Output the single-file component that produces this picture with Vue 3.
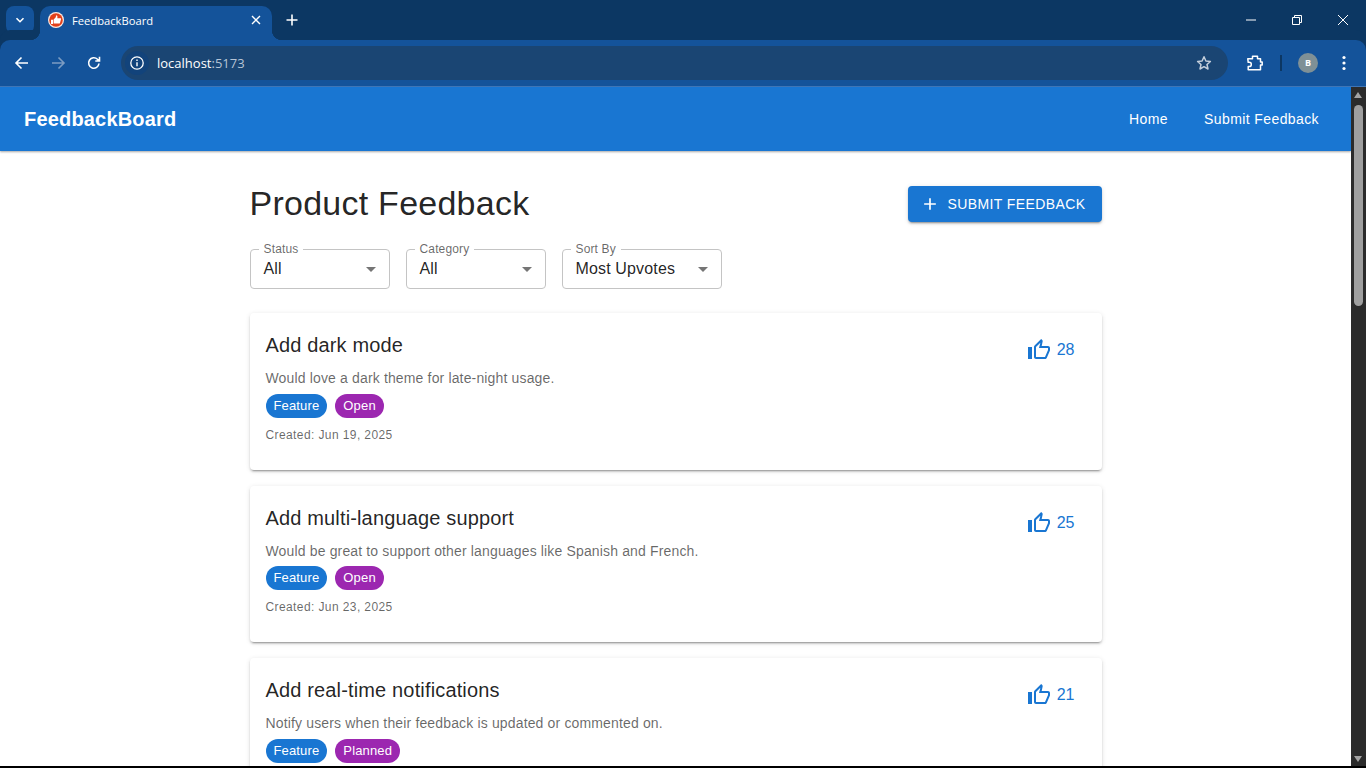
<template>
  <div class="window">
    <div class="tabstrip">
      <button class="tab-search">
        <svg width="12" height="12" viewBox="0 0 12 12"><path d="M2.5 4.2 6 7.7l3.5-3.5" fill="none" stroke="#fff" stroke-width="1.6" /></svg>
      </button>
      <div class="tab">
        <svg class="favicon" width="16" height="16" viewBox="0 0 16 16">
          <circle cx="8" cy="8" r="8" fill="#fbe9e2" />
          <circle cx="8" cy="8" r="6.800" fill="#e2401a" />
          <path d="M3 7.800h2v4.200H3zM5.600 7.600l2-2 .7-2.300c1 0 1.400 1 1 3h3c.6 0 .9.500.7 1l-1 3.700c-.1.400-.4.600-.8.600H5.600z" fill="#fff" />
        </svg>
        <span class="tab-title">FeedbackBoard</span>
        <svg width="10" height="10" viewBox="0 0 10 10"><path d="M1 1l8 8M9 1l-8 8" stroke="#fff" stroke-width="1.4" /></svg>
      </div>
      <svg class="new-tab" width="12" height="12" viewBox="0 0 12 12"><path d="M6 .5v11M.5 6h11" stroke="#fff" stroke-width="1.6" /></svg>
      <div class="win-controls">
        <svg width="10" height="10" viewBox="0 0 10 10"><path d="M0 5h10" stroke="#fff" /></svg>
        <svg width="10" height="10" viewBox="0 0 10 10"><path d="M.5 2.5h7v7h-7zM2.5 2.5V.5h7v7h-2" fill="none" stroke="#fff" /></svg>
        <svg width="10" height="10" viewBox="0 0 10 10"><path d="M0 0l10 10M10 0L0 10" stroke="#fff" /></svg>
      </div>
    </div>

    <div class="toolbar">
      <div class="nav-icons">
        <svg width="16" height="16" viewBox="0 0 16 16"><path d="M14 8H2.5M7.5 2.5 2 8l5.500 5.500" fill="none" stroke="#fff" stroke-width="1.6" /></svg>
        <svg width="16" height="16" viewBox="0 0 16 16"><path d="M2 8h11.500M8.500 2.500 14 8l-5.500 5.500" fill="none" stroke="#7c9cc2" stroke-width="1.6" /></svg>
        <svg width="16" height="16" viewBox="0 0 16 16"><path d="M13 8.500A5.200 5.200 0 1 1 11.500 4.300L13.500 6M13.500 1.800V6H9.300" fill="none" stroke="#fff" stroke-width="1.6" /></svg>
      </div>
      <div class="omnibox">
        <div class="site-info">
          <svg width="16" height="16" viewBox="0 0 16 16"><circle cx="8" cy="8" r="6.200" fill="none" stroke="#fff" stroke-width="1.300" /><path d="M8 7.200v4M8 4.400v1.500" stroke="#fff" stroke-width="1.400" /></svg>
        </div>
        <span class="url">localhost<span class="url-port">:5173</span></span>
        <svg class="star" width="16" height="16" viewBox="0 0 16 16"><path d="M8 1.800l1.900 4.200 4.500.5-3.400 3 1 4.500L8 11.700 4 14l1-4.500-3.400-3 4.500-.5z" fill="none" stroke="#c3cedb" stroke-width="1.500" stroke-linejoin="round" /></svg>
      </div>
      <svg class="ext" width="18" height="18" viewBox="0 0 18 18"><path d="M1.800 4.800h4.700V2.300h5v2.500h3v3.200h1.700v3h-1.700v4.700H2.200v-3.200h1a2.100 2.100 0 0 0 0-4.200h-1z" fill="none" stroke="#fff" stroke-width="1.500" stroke-linejoin="round" /></svg>
      <span class="divider"></span>
      <span class="avatar">B</span>
      <svg class="menu" width="4" height="16" viewBox="0 0 4 16"><circle cx="2" cy="2.500" r="1.600" fill="#fff" /><circle cx="2" cy="8" r="1.600" fill="#fff" /><circle cx="2" cy="13.500" r="1.600" fill="#fff" /></svg>
    </div>

    <div class="viewport">
      <div class="page">
        <header class="appbar">
          <div class="brand">FeedbackBoard</div>
          <nav class="nav">
            <a>Home</a>
            <a>Submit Feedback</a>
          </nav>
        </header>

        <main class="container">
          <div class="heading">
            <h1>Product Feedback</h1>
            <button class="submit">
              <svg width="20" height="20" viewBox="0 0 24 24"><path d="M19 13h-6v6h-2v-6H5v-2h6V5h2v6h6v2z" fill="#fff" /></svg>
              SUBMIT FEEDBACK
            </button>
          </div>

          <div class="filters">
            <div v-for="f in filters" :key="f.label" class="select" :style="{ width: f.width + 'px' }">
              <label>{{ f.label }}</label>
              <span>{{ f.value }}</span>
              <svg width="24" height="24" viewBox="0 0 24 24"><path d="M7 10l5 5 5-5z" fill="#757575" /></svg>
            </div>
          </div>

          <article v-for="item in feedback" :key="item.title" class="card">
            <div class="card-body">
              <h2>{{ item.title }}</h2>
              <p class="desc">{{ item.desc }}</p>
              <div class="chips">
                <span class="chip chip-blue">{{ item.category }}</span>
                <span class="chip chip-purple">{{ item.status }}</span>
              </div>
              <p class="created">Created: {{ item.created }}</p>
            </div>
            <div class="votes">
              <svg width="24" height="24" viewBox="0 0 24 24"><path d="M9 21h9c.83 0 1.540-.5 1.840-1.220l3.020-7.050c.09-.23.14-.47.14-.73v-2c0-1.100-.9-2-2-2h-6.310l.95-4.570.03-.32c0-.41-.17-.79-.44-1.060L14.170 1 7.580 7.590C7.220 7.950 7 8.450 7 9v10c0 1.100.9 2 2 2zM9 9l4.340-4.340L12 10h9v2l-3 7H9V9zM1 9h4v12H1z" fill="#1976d2" /></svg>
              <span>{{ item.votes }}</span>
            </div>
          </article>
        </main>
      </div>

      <div class="scrollbar">
        <span class="arrow-up"></span>
        <span class="thumb"></span>
        <span class="arrow-down"></span>
      </div>
    </div>
    <div class="bottom-edge"></div>
  </div>
</template>

<script setup>
const filters = [
  { label: 'Status', value: 'All', width: 140 },
  { label: 'Category', value: 'All', width: 140 },
  { label: 'Sort By', value: 'Most Upvotes', width: 160 },
]

const feedback = [
  { title: 'Add dark mode', desc: 'Would love a dark theme for late-night usage.', category: 'Feature', status: 'Open', created: 'Jun 19, 2025', votes: 28 },
  { title: 'Add multi-language support', desc: 'Would be great to support other languages like Spanish and French.', category: 'Feature', status: 'Open', created: 'Jun 23, 2025', votes: 25 },
  { title: 'Add real-time notifications', desc: 'Notify users when their feedback is updated or commented on.', category: 'Feature', status: 'Planned', created: 'Jun 25, 2025', votes: 21 },
]
</script>

<style>
html, body {
  margin: 0;
  overflow: hidden;
}
</style>

<style scoped>
.window {
  height: 768px;
  display: flex;
  flex-direction: column;
  overflow: hidden;
  background: #000;
  font-family: "Liberation Sans", Arial, sans-serif;
}

/* browser chrome */
.tabstrip {
  height: 40px;
  flex: none;
  display: flex;
  align-items: flex-end;
  background: #0c3763;
  padding-left: 6px;
}
.tab-search {
  width: 28px;
  height: 28px;
  margin-bottom: 6px;
  padding: 0;
  border: 0;
  border-radius: 8px;
  background: #14539a;
  display: flex;
  align-items: center;
  justify-content: center;
}
.tab {
  position: relative;
  width: 232px;
  height: 34px;
  margin-left: 6px;
  box-sizing: border-box;
  padding: 0 11px 6px 8px;
  display: flex;
  align-items: center;
  border-radius: 10px 10px 0 0;
  background: #14539a;
}
.tab::before,
.tab::after {
  content: "";
  position: absolute;
  bottom: 0;
  width: 10px;
  height: 10px;
}
.tab::before {
  left: -10px;
  background: radial-gradient(circle at 0 0, transparent 10px, #14539a 10.5px);
}
.tab::after {
  right: -10px;
  background: radial-gradient(circle at 100% 0, transparent 10px, #14539a 10.5px);
}
.tab-title {
  flex: 1;
  margin-left: 8px;
  color: #fff;
  font: 11.2px "Open Sans", sans-serif;
}
.new-tab {
  margin: 0 0 14px 14px;
}
.win-controls {
  margin-left: auto;
  height: 40px;
  display: flex;
  align-items: center;
  gap: 36px;
  padding-right: 18px;
}

.toolbar {
  height: 47px;
  flex: none;
  box-sizing: border-box;
  display: flex;
  align-items: center;
  background: #14539a;
  border-bottom: 1px solid #3f75b5;
  border-radius: 10px 10px 0 0;
  box-shadow: 0 -10px 0 #0c3763;
}
.nav-icons {
  width: 121px;
  flex: none;
  box-sizing: border-box;
  padding-left: 14px;
  display: flex;
  gap: 20px;
}
.omnibox {
  width: 1107px;
  height: 34px;
  flex: none;
  display: flex;
  align-items: center;
  border-radius: 17px;
  background: #1a4573;
}
.site-info {
  width: 24px;
  height: 24px;
  margin-left: 4px;
  border-radius: 12px;
  background: #12437b;
  display: flex;
  align-items: center;
  justify-content: center;
}
.url {
  margin-left: 8px;
  color: #fff;
  font: 13px "Open Sans", sans-serif;
}
.url-port {
  color: #b6c4d6;
}
.star {
  margin-left: auto;
  margin-right: 16px;
}
.ext {
  margin-left: 18px;
}
.divider {
  width: 2px;
  height: 16px;
  margin-left: 16px;
  background: #0c3763;
}
.avatar {
  width: 20px;
  height: 20px;
  margin-left: 16px;
  border-radius: 50%;
  background: #7f9096;
  color: #fff;
  font: bold 9px/20px "Open Sans", sans-serif;
  text-align: center;
}
.menu {
  margin-left: 24px;
}

.viewport {
  flex: 1;
  min-height: 0;
  display: flex;
}
.page {
  flex: 1;
  min-width: 0;
  overflow: hidden;
  background: #fff;
}

/* app */
.appbar {
  height: 64px;
  box-sizing: border-box;
  padding: 0 24px;
  display: flex;
  align-items: center;
  justify-content: space-between;
  background: #1976d2;
  color: #fff;
  box-shadow: 0 1px 2px rgba(0, 0, 0, .35);
  position: relative;
}
.brand {
  font-size: 20px;
  font-weight: 700;
  letter-spacing: .18px;
}
.nav {
  display: flex;
  gap: 20px;
}
.nav a {
  padding: 6px 8px;
  font-size: 14px;
  line-height: 24px;
  letter-spacing: .4px;
}
.container {
  max-width: 900px;
  margin: 0 auto;
  box-sizing: border-box;
  padding: 33px 24px 0;
}
.heading {
  height: 40px;
  display: flex;
  align-items: center;
  justify-content: space-between;
}
h1 {
  margin: 0 0 2px;
  color: rgba(0, 0, 0, .87);
  font-size: 34px;
  font-weight: 400;
  letter-spacing: .25px;
}
.submit {
  height: 36px;
  padding: 0 16px 0 12px;
  display: flex;
  align-items: center;
  gap: 8px;
  border: 0;
  border-radius: 4px;
  background: #1976d2;
  color: #fff;
  font: 14px "Liberation Sans", Arial, sans-serif;
  letter-spacing: .4px;
  box-shadow: 0 3px 1px -2px rgba(0, 0, 0, .2), 0 2px 2px rgba(0, 0, 0, .14), 0 1px 5px rgba(0, 0, 0, .12);
}
.filters {
  margin-top: 25px;
  display: flex;
  gap: 16px;
}
.select {
  position: relative;
  height: 40px;
  box-sizing: border-box;
  padding: 0 6px 0 13px;
  display: flex;
  align-items: center;
  justify-content: space-between;
  border: 1px solid #c4c4c4;
  border-radius: 4px;
  color: rgba(0, 0, 0, .87);
  font-size: 16px;
  letter-spacing: .15px;
}
.select label {
  position: absolute;
  top: -7px;
  left: 8px;
  padding: 0 5px;
  background: #fff;
  color: rgba(0, 0, 0, .6);
  font-size: 12px;
  line-height: 12px;
}
.card {
  margin-top: 24px;
  height: 156.5px;
  box-sizing: border-box;
  padding: 16px;
  display: flex;
  justify-content: space-between;
  border-radius: 4px;
  background: #fff;
  box-shadow: 0 3px 1px -2px rgba(0, 0, 0, .2), 0 2px 2px rgba(0, 0, 0, .14), 0 1px 5px rgba(0, 0, 0, .12);
}
.card + .card {
  margin-top: 16px;
}
h2 {
  margin: 0;
  color: rgba(0, 0, 0, .87);
  font-size: 20px;
  font-weight: 400;
  line-height: 32px;
  letter-spacing: .15px;
}
.desc {
  margin: 7px 0 0;
  color: rgba(0, 0, 0, .6);
  font-size: 14px;
  line-height: 20px;
  letter-spacing: .15px;
}
.chips {
  margin-top: 5.75px;
  display: flex;
  gap: 8px;
}
.chip {
  height: 24px;
  padding: 0 8px;
  border-radius: 12px;
  color: #fff;
  font-size: 13px;
  line-height: 24px;
  letter-spacing: .15px;
}
.chip-blue {
  background: #1976d2;
}
.chip-purple {
  background: #9c27b0;
}
.created {
  margin: 8px 0 0;
  color: rgba(0, 0, 0, .6);
  font-size: 12px;
  line-height: 18px;
  letter-spacing: .4px;
}
.votes {
  height: 40px;
  margin-top: 1px;
  padding: 0 11px 0 10px;
  display: flex;
  align-items: center;
  gap: 6px;
  color: #1976d2;
  font-size: 16px;
}

/* scrollbar */
.scrollbar {
  width: 15px;
  flex: none;
  position: relative;
  background: #2b2b2b;
}
.arrow-up,
.arrow-down {
  position: absolute;
  left: 3px;
  width: 0;
  height: 0;
  border-left: 4.500px solid transparent;
  border-right: 4.500px solid transparent;
}
.arrow-up {
  top: 5px;
  border-bottom: 6px solid #a3a3a3;
}
.arrow-down {
  bottom: 4px;
  border-top: 6px solid #a3a3a3;
}
.thumb {
  position: absolute;
  top: 18px;
  left: 3px;
  width: 9px;
  height: 201px;
  border-radius: 5px;
  background: #9f9f9f;
}
.bottom-edge {
  height: 2px;
  flex: none;
  background: #000;
}
</style>
